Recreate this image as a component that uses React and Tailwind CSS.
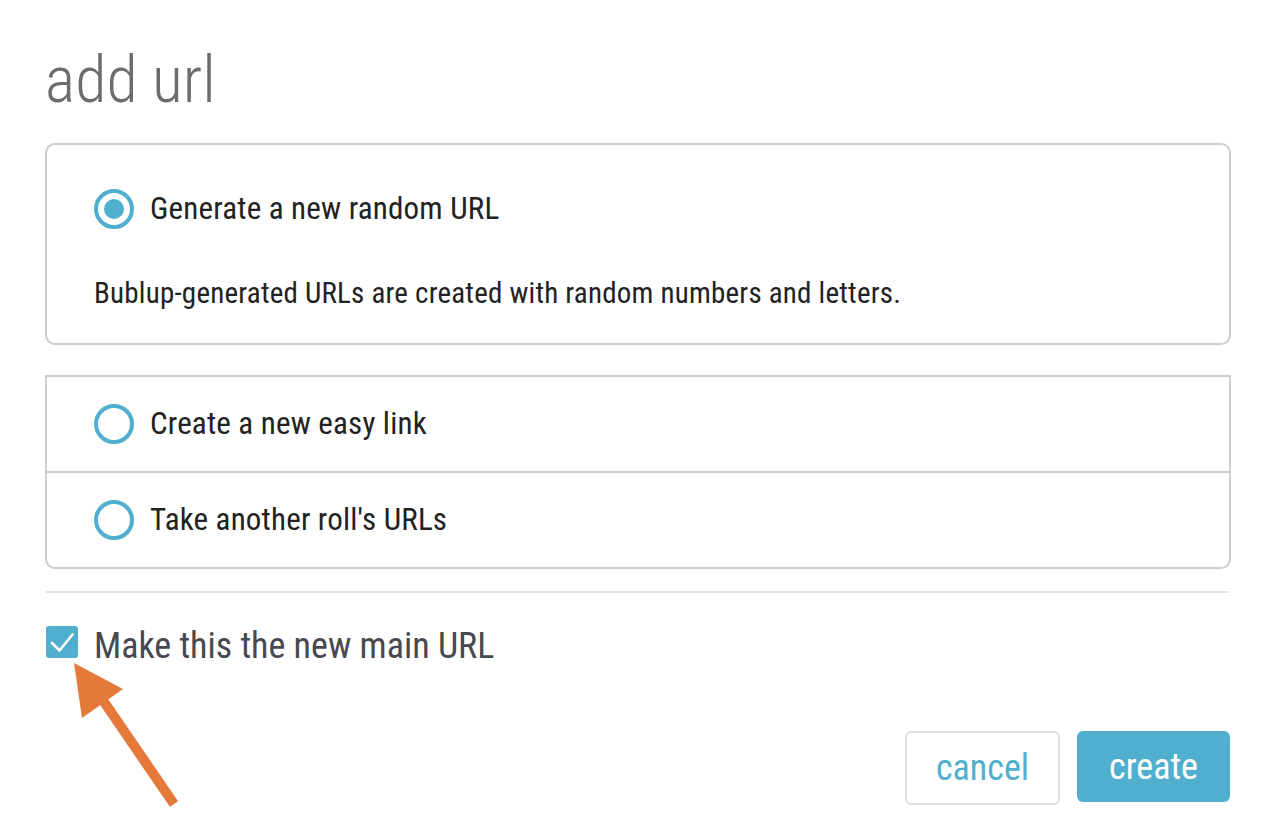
import React from "react"

function Radio({ checked }) {
  return (
    <span className="w-[40px] h-[40px] rounded-full border-[4px] border-[#50afce] flex items-center justify-center shrink-0">
      {checked && <span className="w-[20px] h-[20px] rounded-full bg-[#50afce]" />}
    </span>
  )
}

export default function App() {
  return (
    <div className="relative w-full h-[834px] bg-white px-[45px] font-['Roboto',sans-serif] font-stretch-condensed">
      <h1 className="pt-[49px] text-[64px] leading-[64px] font-light text-[#6c6c70]">add url</h1>

      <div className="mt-[30px] h-[202px] border-2 border-[#cdcdcd] rounded-[10px] pt-[42px] pl-[47px]">
        <div className="h-[44px] flex items-center gap-4">
          <Radio checked />
          <span className="text-[31px] tracking-[0.2px] text-[#222]">Generate a new random URL</span>
        </div>
        <p className="mt-[47px] text-[29px] leading-[30px] tracking-[0.22px] text-[#222]">
          Bublup-generated URLs are created with random numbers and letters.
        </p>
      </div>

      <div className="mt-[30px] border-2 border-[#cdcdcd] rounded-b-[10px]">
        <div className="h-[94px] flex items-center gap-4 pl-[47px]">
          <Radio />
          <span className="text-[31px] tracking-[0.2px] text-[#222]">Create a new easy link</span>
        </div>
        <div className="h-[96px] flex items-center gap-4 pl-[47px] border-t-2 border-[#cdcdcd]">
          <Radio />
          <span className="text-[31px] tracking-[0.2px] text-[#222]">Take another roll's URLs</span>
        </div>
      </div>

      <div className="mt-[22px] ml-[1px] mr-[2px] h-[2px] bg-[#e3e3e3]" />

      <div className="mt-[33px] ml-[1px] h-[32px] flex items-center gap-4">
        <span className="w-[32px] h-[32px] rounded-[3px] bg-[#50afce] shrink-0">
          <svg width="32" height="32" viewBox="0 0 32 32" fill="none">
            <path d="M6 17l7.5 7.5L26.5 8.5" stroke="white" strokeWidth="2.6" strokeLinecap="round" strokeLinejoin="round" />
          </svg>
        </span>
        <span className="pt-[8px] text-[36px] leading-[32px] text-[#48484f]">Make this the new main URL</span>
      </div>

      <div className="mt-[73px] mr-[1px] flex justify-end items-start gap-[17px]">
        <button className="w-[155px] h-[74px] border-2 border-[#e0e0e0] rounded-[6px] text-[36px] text-[#50afce] bg-white">
          cancel
        </button>
        <button className="w-[153px] h-[71px] rounded-[6px] text-[36px] text-white bg-[#50afce]">
          create
        </button>
      </div>

      <svg className="absolute left-0 top-0 pointer-events-none" width="260" height="834" viewBox="0 0 260 834">
        <polygon points="74,663 123,689 82,718" fill="#e5793a" />
        <line x1="100" y1="696" x2="174" y2="804" stroke="#e5793a" strokeWidth="10" />
      </svg>
    </div>
  )
}
